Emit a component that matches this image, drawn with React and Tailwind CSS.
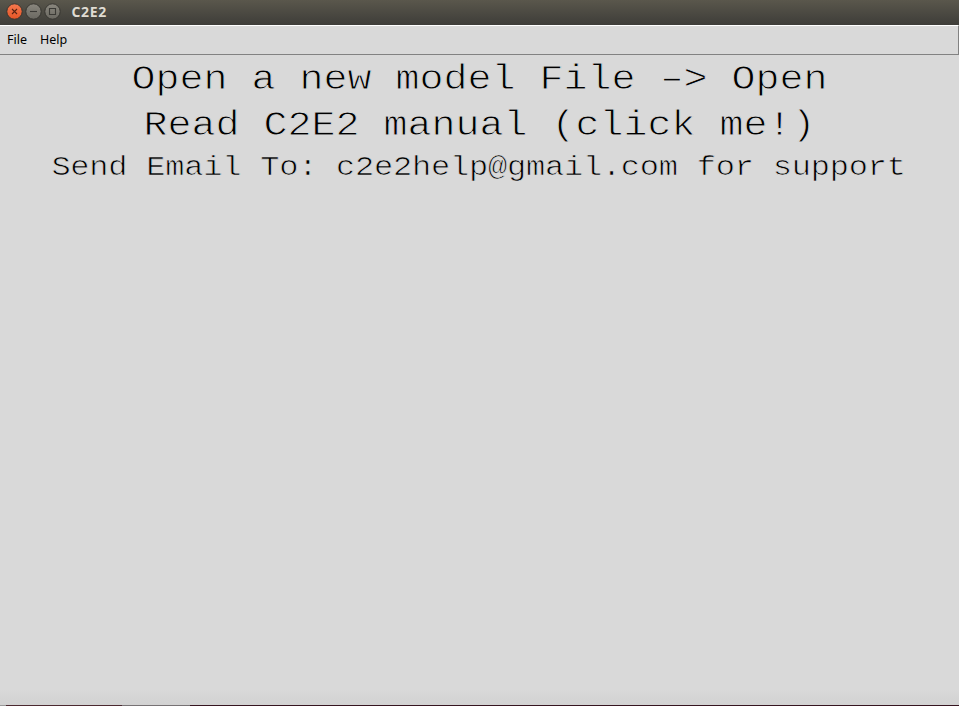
function WindowButton({ kind }) {
  const close = kind === "close";
  return (
    <svg className="size-[17px] shrink-0" viewBox="0 0 17 17">
      <defs>
        <linearGradient id={`fill-${kind}`} x1="0" y1="0" x2="0" y2="1">
          <stop offset="0" stopColor={close ? "#f4794f" : "#8a877e"} />
          <stop offset="1" stopColor={close ? "#e65526" : "#6a6861"} />
        </linearGradient>
      </defs>
      <circle cx="8.5" cy="8.5" r="7.7" fill={`url(#fill-${kind})`} stroke="#33322e" strokeWidth="0.9" />
      <g fill="none" stroke={close ? "#5a2413" : "#3b3a36"} strokeWidth="1.1">
        {close && <path d="M6 6l5 5M11 6l-5 5" />}
        {kind === "minimize" && <path d="M5 8.5h7" />}
        {kind === "maximize" && <path d="M5.5 5.5h6v6h-6z" />}
      </g>
    </svg>
  );
}

function TitleBar() {
  return (
    <header className="flex h-[25px] items-start bg-gradient-to-b from-[#5a574c] to-[#3e3d39] pl-1.5">
      <div className="flex gap-0.5 pt-[3px]">
        <WindowButton kind="close" />
        <WindowButton kind="minimize" />
        <WindowButton kind="maximize" />
      </div>
      <h1 className="ml-[10.5px] pt-[3px] font-['Open_Sans',sans-serif] text-[14px] leading-[18px] font-bold tracking-[0.7px] text-[#dfdbd2]">
        C2E2
      </h1>
    </header>
  );
}

function MenuBar() {
  return (
    <nav className="flex h-[30px] gap-[13px] border-t border-r border-b border-t-white border-r-[#828282] border-b-[#828282] pt-[5px] pl-[7px] font-['Noto_Sans',sans-serif] text-[12.5px] leading-[18px] text-black">
      <span>File</span>
      <span>Help</span>
    </nav>
  );
}

export default function App() {
  return (
    <div className="flex h-[706px] w-[959px] flex-col overflow-hidden bg-[#d9d9d9]">
      <TitleBar />
      <MenuBar />
      <main className="flex-1 pt-px text-center font-['Liberation_Mono',monospace] whitespace-nowrap text-black [-webkit-text-stroke:1px_#d9d9d9]">
        <p className="origin-[50%_35px] scale-y-[0.87] text-[40px] leading-[46px]">
          Open a new model File <span className="inline-block scale-x-[1.6]">-</span>&gt; Open
        </p>
        <p className="origin-[50%_35px] scale-y-[0.87] text-[40px] leading-[46px]">Read C2E2 manual (click me!)</p>
        <p className="origin-[50%_28px] scale-y-[0.88] pr-0.5 text-[32px] leading-[38px] tracking-[-0.22px] [-webkit-text-stroke-width:0.8px]">
          Send Email To: c2e2help@gmail.com for support
        </p>
      </main>
      <div className="h-4 bg-gradient-to-b from-[#d9d9d9] to-[#d2d2d2]" />
      <div className="flex h-px">
        <div className="w-1.5 bg-[#999999]" />
        <div className="w-[116px] bg-[#4b2930]" />
        <div className="w-[68px] bg-[#777274]" />
        <div className="flex-1 bg-[#35141f]" />
      </div>
    </div>
  );
}
